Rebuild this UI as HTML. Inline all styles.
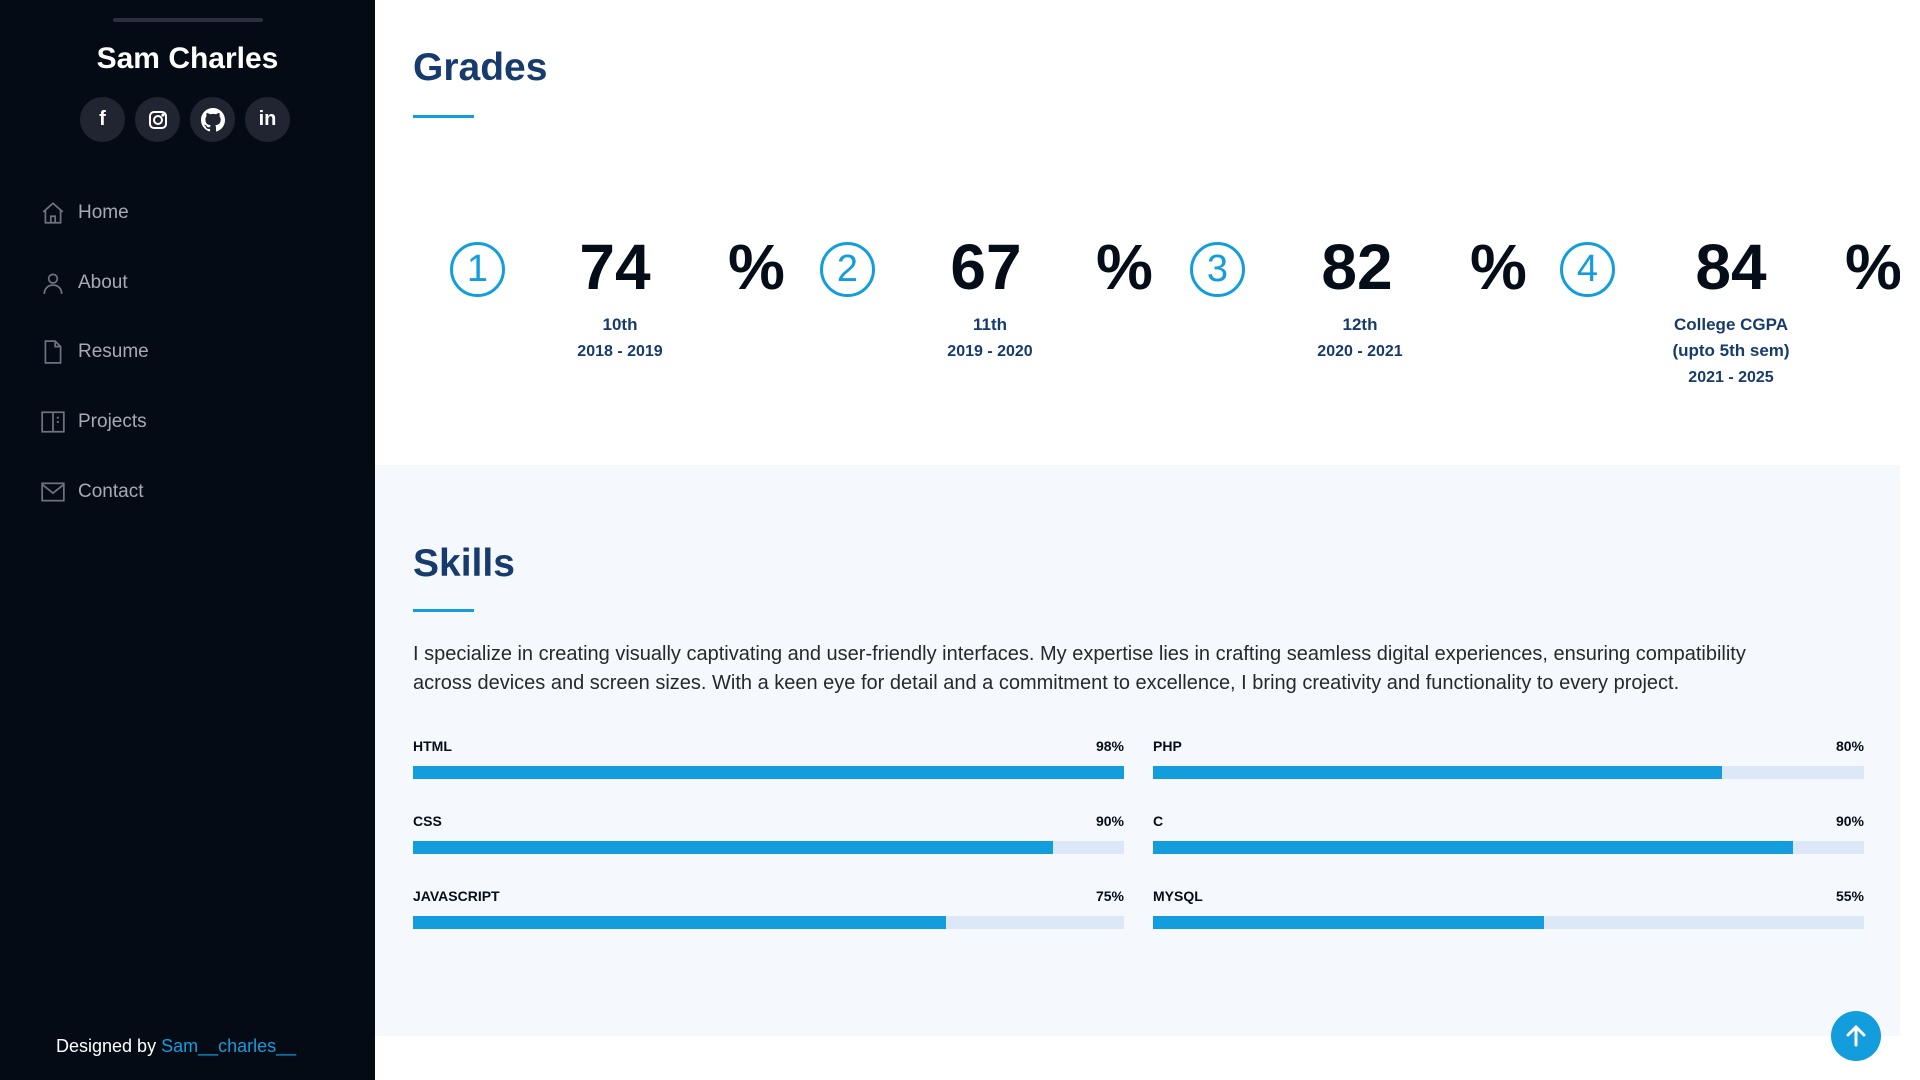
<!DOCTYPE html>
<html><head><meta charset="utf-8"><style>
*{margin:0;padding:0;box-sizing:border-box}
body{width:1920px;height:1080px;overflow:hidden;background:#fff;font-family:"Liberation Sans",sans-serif;position:relative}
.side{position:absolute;left:0;top:0;width:375px;height:1080px;background:#040b14}
.bar{position:absolute;left:113px;top:18px;width:150px;height:4px;border-radius:2px;background:#2c2f3f}
.name{position:absolute;left:0;width:375px;top:42px;text-align:center;color:#fff;font-weight:bold;font-size:30px}
.soc{position:absolute;top:97px;width:45px;height:45px;border-radius:50%;background:#212431;display:flex;align-items:center;justify-content:center;color:#fff;font-weight:bold;font-size:20px}
.nav{position:absolute;left:40px;color:#a8a9b4;font-size:19px;display:flex;align-items:center}
.nav svg{width:26px;height:26px;margin-right:12px;fill:none;stroke:#6f7180;stroke-width:1.6}
.foot{position:absolute;left:56px;top:1036px;color:#fff;font-size:18px}
.foot span{color:#149ddd}
h2{position:absolute;left:413px;color:#173b6c;font-size:39px;font-weight:bold}
.ul{position:absolute;left:413px;width:61px;height:3px;background:#149ddd}
.circ{position:absolute;top:242px;width:55px;height:55px;border:3px solid #149ddd;border-radius:50%;color:#149ddd;font-size:38px;display:flex;align-items:center;justify-content:center}
.num{position:absolute;top:230px;width:200px;text-align:center;font-size:64px;font-weight:bold;color:#050d18}
.pc{position:absolute;top:230px;font-size:64px;font-weight:bold;color:#050d18}
.lab{position:absolute;width:240px;text-align:center;color:#173b6c;font-weight:bold;font-size:17px;line-height:26px}
.lab small{font-size:16px}
.skills{position:absolute;left:375px;top:465px;width:1525px;height:571px;background:#f5f8fd}
p{position:absolute;left:413px;top:640px;width:1380px;font-size:20px;line-height:29px;color:#272829}
.sk{position:absolute;width:711px;height:50px}
.sk .t{display:flex;justify-content:space-between;font-size:14px;font-weight:bold;color:#050d18}
.sk .tr{position:absolute;top:28px;left:0;right:0;height:13px;background:#dce8f8}
.sk .f{height:13px;background:#149ddd}
.top{position:absolute;left:1831px;top:1011px;width:50px;height:50px;border-radius:50%;background:#149ddd}
.sb{position:absolute;left:1900px;top:0;width:20px;height:1080px;background:#fff}
.th{position:absolute;left:1906px;top:425px;width:8px;height:207px;border-radius:4px;background:#c1c1c1}
</style></head><body>
<div class="side">
<div class="bar"></div>
<div class="name">Sam Charles</div>
<div class="soc" style="left:80px">f</div>
<div class="soc" style="left:135px"><svg width="20" height="20" viewBox="0 0 20 20" fill="none" stroke="#fff" stroke-width="2"><rect x="2" y="2" width="16" height="16" rx="4"/><circle cx="10" cy="10" r="4"/><circle cx="15" cy="5" r=".6" fill="#fff"/></svg></div>
<div class="soc" style="left:190px"><svg width="24" height="24" viewBox="0 0 16 16" fill="#fff"><path d="M8 0C3.580 0 0 3.580 0 8c0 3.540 2.290 6.530 5.470 7.590.4.07.55-.17.55-.38v-1.330c-2.230.48-2.700-1.070-2.700-1.070-.36-.93-.89-1.170-.89-1.170-.73-.5.06-.49.06-.49.8.06 1.230.83 1.230.83.71 1.220 1.870.87 2.330.66.07-.52.28-.87.51-1.070-1.780-.2-3.640-.89-3.640-3.950 0-.87.31-1.590.82-2.150-.08-.2-.36-1.020.08-2.120 0 0 .67-.21 2.200.82a7.600 7.600 0 0 1 4 0c1.530-1.040 2.200-.82 2.200-.82.44 1.100.16 1.920.08 2.120.51.56.82 1.270.82 2.150 0 3.070-1.870 3.750-3.650 3.950.29.25.54.73.54 1.480v2.200c0 .21.15.46.55.38A8 8 0 0 0 16 8c0-4.420-3.580-8-8-8z"/></svg></div>
<div class="soc" style="left:245px">in</div>
<div class="nav" style="top:200px"><svg viewBox="0 0 24 24"><path d="M3 11 12 3l9 8M5 9.5V21h14V9.5M10 21v-6h4v6"/></svg>Home</div>
<div class="nav" style="top:270px"><svg viewBox="0 0 24 24"><circle cx="12" cy="8" r="4"/><path d="M4 22c0-5 3.500-8 8-8s8 3 8 8"/></svg>About</div>
<div class="nav" style="top:339px"><svg viewBox="0 0 24 24"><path d="M5 2h9l5 5v15H5zM14 2v5h5"/></svg>Resume</div>
<div class="nav" style="top:409px"><svg viewBox="0 0 24 24"><rect x="2" y="3" width="20" height="18"/><path d="M12 3v18M15.500 8h2M15.500 12h2"/></svg>Projects</div>
<div class="nav" style="top:479px"><svg viewBox="0 0 24 24"><rect x="2" y="4" width="20" height="16"/><path d="m2 5 10 8 10-8"/></svg>Contact</div>
<div class="foot">Designed by <span>Sam__charles__</span></div>
</div>

<h2 style="top:46px">Grades</h2><div class="ul" style="top:115px"></div>

<div class="circ" style="left:450px">1</div><div class="num" style="left:515px">74</div><div class="pc" style="left:728px">%</div>
<div class="lab" style="left:500px;top:312px">10th<br><small>2018 - 2019</small></div>
<div class="circ" style="left:820px">2</div><div class="num" style="left:886px">67</div><div class="pc" style="left:1096px">%</div>
<div class="lab" style="left:870px;top:312px">11th<br><small>2019 - 2020</small></div>
<div class="circ" style="left:1190px">3</div><div class="num" style="left:1257px">82</div><div class="pc" style="left:1470px">%</div>
<div class="lab" style="left:1240px;top:312px">12th<br><small>2020 - 2021</small></div>
<div class="circ" style="left:1560px">4</div><div class="num" style="left:1631px">84</div><div class="pc" style="left:1845px">%</div>
<div class="lab" style="left:1611px;top:312px">College CGPA<br>(upto 5th sem)<br><small>2021 - 2025</small></div>

<div class="skills"></div>
<h2 style="top:542px">Skills</h2><div class="ul" style="top:609px"></div>
<p>I specialize in creating visually captivating and user-friendly interfaces. My expertise lies in crafting seamless digital experiences, ensuring compatibility across devices and screen sizes. With a keen eye for detail and a commitment to excellence, I bring creativity and functionality to every project.</p>

<div class="sk" style="left:413px;top:738px"><div class="t"><span>HTML</span><span>98%</span></div><div class="tr"><div class="f" style="width:100%"></div></div></div>
<div class="sk" style="left:413px;top:813px"><div class="t"><span>CSS</span><span>90%</span></div><div class="tr"><div class="f" style="width:90%"></div></div></div>
<div class="sk" style="left:413px;top:888px"><div class="t"><span>JAVASCRIPT</span><span>75%</span></div><div class="tr"><div class="f" style="width:75%"></div></div></div>
<div class="sk" style="left:1153px;top:738px"><div class="t"><span>PHP</span><span>80%</span></div><div class="tr"><div class="f" style="width:80%"></div></div></div>
<div class="sk" style="left:1153px;top:813px"><div class="t"><span>C</span><span>90%</span></div><div class="tr"><div class="f" style="width:90%"></div></div></div>
<div class="sk" style="left:1153px;top:888px"><div class="t"><span>MYSQL</span><span>55%</span></div><div class="tr"><div class="f" style="width:55%"></div></div></div>

<div class="top"><svg width="50" height="50" viewBox="0 0 50 50" fill="none" stroke="#fff" stroke-width="3" stroke-linecap="round"><path d="M25 34V16M17 24l8-8 8 8"/></svg></div>
<div class="sb"><div class="th"></div></div>
</body></html>
